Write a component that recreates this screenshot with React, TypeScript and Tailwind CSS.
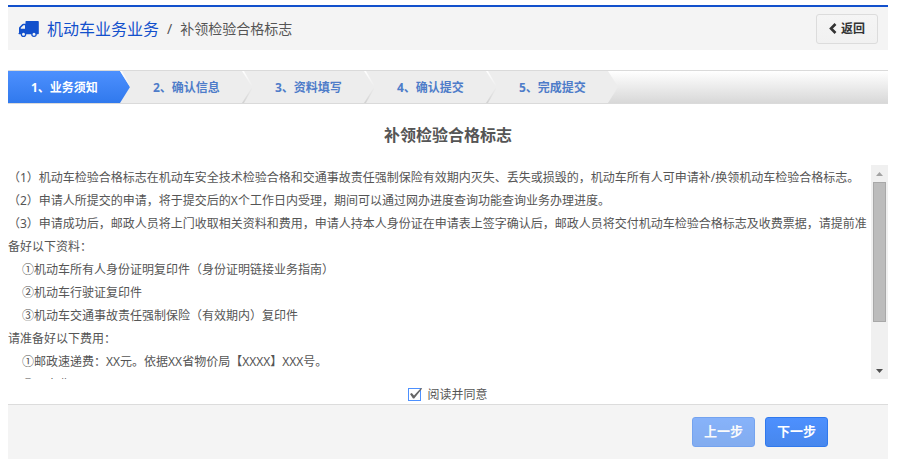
import { useRef, useState } from "react";
import { clsx } from "clsx";

const STEPS = ["1、业务须知", "2、确认信息", "3、资料填写", "4、确认提交", "5、完成提交"];

const NOTICE = [
  { text: "（1）机动车检验合格标志在机动车安全技术检验合格和交通事故责任强制保险有效期内灭失、丢失或损毁的，机动车所有人可申请补/换领机动车检验合格标志。" },
  { text: "（2）申请人所提交的申请，将于提交后的X个工作日内受理，期间可以通过网办进度查询功能查询业务办理进度。" },
  { text: "（3）申请成功后，邮政人员将上门收取相关资料和费用，申请人持本人身份证在申请表上签字确认后，邮政人员将交付机动车检验合格标志及收费票据，请提前准备好以下资料：" },
  { text: "①机动车所有人身份证明复印件（身份证明链接业务指南）", indent: true },
  { text: "②机动车行驶证复印件", indent: true },
  { text: "③机动车交通事故责任强制保险（有效期内）复印件", indent: true },
  { text: "请准备好以下费用：" },
  { text: "①邮政速递费：XX元。依据XX省物价局【XXXX】XXX号。", indent: true },
  { text: "②工本费：XX元。", indent: true },
];

const LINE = 23;
const TRACK = 180;
const THUMB = 140;

function TruckIcon() {
  return (
    <svg width="21" height="18" viewBox="0 0 21 18" className="shrink-0" aria-hidden="true">
      <path
        fill="#1250cc"
        fillRule="evenodd"
        d="M7.500 1.500Q7.500 1 8.200 1H20Q20.800 1 20.800 1.800V13.500Q20.800 14.200 20 14.200H18.800A2.800 2.800 0 0 1 13.200 14.200H8.300A2.800 2.800 0 0 1 2.700 14.200H1.200Q.4 14.200 .4 13.500L1 12.800V8Q1 7.400 1.500 6.900L4.200 4.200Q4.700 3.700 5.400 3.700H7.500ZM2.800 8.700H7V5.300H5.600Q5.300 5.300 5.100 5.500L3.100 7.500Q2.800 7.800 2.800 8.100ZM5.500 12.800A1.500 1.500 0 1 0 5.500 15.800A1.500 1.500 0 1 0 5.500 12.800ZM16 12.800A1.500 1.500 0 1 0 16 15.800A1.500 1.500 0 1 0 16 12.800Z"
      />
    </svg>
  );
}

function StepBar({ current }: { current: number }) {
  return (
    <ol className="flex h-[34px] border-y border-[#dadada] bg-linear-to-b from-white to-[#d8d8d8] text-xs font-bold">
      {STEPS.map((label, i) => {
        const active = i === current;
        const last = i === STEPS.length - 1;
        return (
          <li key={label} className="flex" aria-current={active ? "step" : undefined}>
            <span
              className={clsx(
                "flex w-28 items-center pt-0.5 pl-[23px]",
                active ? "bg-linear-to-b from-[#4d90fe] to-[#3079ed] text-white" : "bg-[#ededed] text-[#4e7cc9]"
              )}
            >
              {label}
            </span>
            <svg
              width="10"
              height="32"
              viewBox="0 0 10 32"
              className={last ? "" : "bg-[#ededed]"}
              aria-hidden="true"
            >
              <defs>
                <linearGradient id="stepTip" x1="0" y1="0" x2="0" y2="1">
                  <stop offset="0" stopColor="#4d90fe" />
                  <stop offset="1" stopColor="#3079ed" />
                </linearGradient>
                <linearGradient id="stepEdge" x1="0" y1="0" x2="0" y2="1">
                  <stop offset="0" stopColor="#ededed" />
                  <stop offset="1" stopColor="#d2d2d2" />
                </linearGradient>
                <linearGradient id="stepShine" x1="0" y1="0" x2="0" y2="1">
                  <stop offset="0" stopColor="#fff" />
                  <stop offset="1" stopColor="#ededed" />
                </linearGradient>
              </defs>
              <path d="M0 0L10 16L0 32Z" fill={active ? "url(#stepTip)" : "#ededed"} />
              {!last && <path d="M0 0H2L10 14V16Z" fill="url(#stepShine)" />}
              {!last && !active && <path d="M10 16V18L2 32H0Z" fill="url(#stepEdge)" />}
            </svg>
          </li>
        );
      })}
    </ol>
  );
}

function NoticeBox() {
  const boxRef = useRef<HTMLDivElement>(null);
  const [ratio, setRatio] = useState(0);

  const handleScroll = () => {
    const el = boxRef.current;
    if (!el) return;
    const max = el.scrollHeight - el.clientHeight;
    setRatio(max > 0 ? el.scrollTop / max : 0);
  };

  const scrollLines = (n: number) => boxRef.current?.scrollBy({ top: n * LINE });

  return (
    <div className="flex h-[214px]">
      <div
        ref={boxRef}
        onScroll={handleScroll}
        tabIndex={0}
        className="min-w-0 flex-1 overflow-y-auto pt-px pb-11 text-xs leading-[23px] text-[#555] outline-none [scrollbar-width:none]"
      >
        {NOTICE.map((line) => (
          <p key={line.text} className={clsx(line.indent && "pl-3.5")}>
            {line.text}
          </p>
        ))}
      </div>
      <div className="flex w-[17px] shrink-0 flex-col bg-[#f0f0f0]">
        <button type="button" aria-label="向上滚动" onClick={() => scrollLines(-1)} className="flex h-[17px] items-center justify-center">
          <svg width="7" height="4" viewBox="0 0 7 4">
            <path d="M3.500 0L7 4H0Z" fill="#a3a3a3" />
          </svg>
        </button>
        <div className="flex-1 px-0.5">
          <div
            className="h-[140px] border border-[#a8a8a8] bg-[#bcbcbc]"
            style={{ transform: `translateY(${ratio * (TRACK - THUMB)}px)` }}
          />
        </div>
        <button type="button" aria-label="向下滚动" onClick={() => scrollLines(1)} className="flex h-[17px] items-center justify-center">
          <svg width="7" height="4" viewBox="0 0 7 4">
            <path d="M0 0H7L3.500 4Z" fill="#505050" />
          </svg>
        </button>
      </div>
    </div>
  );
}

export default function App() {
  const [agreed, setAgreed] = useState(true);

  return (
    <div className="bg-white pt-[5px] pr-[31px] pb-1.5 pl-2 font-['Noto_Sans','Noto_Sans_CJK_SC',sans-serif] text-[#555]">
      <header className="flex h-[45px] items-center border-t-2 border-[#1250cc] bg-[#f4f4f4] px-2.5">
        <TruckIcon />
        <h1 className="ml-2 text-base text-[#1250cc]">机动车业务业务</h1>
        <span className="ml-2 text-sm">/</span>
        <span className="ml-2 text-sm">补领检验合格标志</span>
        <button
          type="button"
          className="ml-auto flex h-[30px] w-[62px] items-center justify-center gap-1 rounded-[3px] border border-[#dcdcdc] bg-linear-to-b from-[#f5f5f5] to-[#f1f1f1] text-xs font-bold text-[#333]"
        >
          <svg width="8" height="12" viewBox="0 0 8 12" aria-hidden="true">
            <path d="M6.500 1L2 5.500L6.500 10" fill="none" stroke="#333" strokeWidth="2.600" />
          </svg>
          返回
        </button>
      </header>

      <main className="mt-5">
        <StepBar current={0} />
        <h2 className="pt-[19px] pb-[18px] text-center text-base font-bold">补领检验合格标志</h2>
        <NoticeBox />
        <div className="flex h-[25px] items-center justify-center pt-1.5">
          <label className="flex items-center gap-1.5 text-xs">
            <span className="relative flex">
              <input
                type="checkbox"
                checked={agreed}
                onChange={(e) => setAgreed(e.target.checked)}
                className="size-[13px] appearance-none border border-[#4d90fe] bg-white"
              />
              {agreed && (
                <svg width="15" height="13" viewBox="0 0 15 13" className="pointer-events-none absolute top-0 left-0" aria-hidden="true">
                  <path d="M2 6L3.800 5L6 7.500L13 0L14.200 .6L6.200 10.500H5Z" fill="#666" />
                </svg>
              )}
            </span>
            阅读并同意
          </label>
        </div>
      </main>

      <footer className="flex h-[55px] items-center justify-end gap-2.5 border-t border-[#dcdcdc] bg-[#f4f4f4] pr-[60px]">
        <button
          type="button"
          disabled
          className="h-[30px] w-[63px] rounded-[3px] border border-[#3079ed] bg-linear-to-b from-[#4d90fe] to-[#4787ed] text-[13px] font-bold text-white opacity-65"
        >
          上一步
        </button>
        <button
          type="button"
          className="h-[30px] w-[63px] rounded-[3px] border border-[#3079ed] bg-linear-to-b from-[#4d90fe] to-[#4787ed] text-[13px] font-bold text-white"
        >
          下一步
        </button>
      </footer>
    </div>
  );
}
